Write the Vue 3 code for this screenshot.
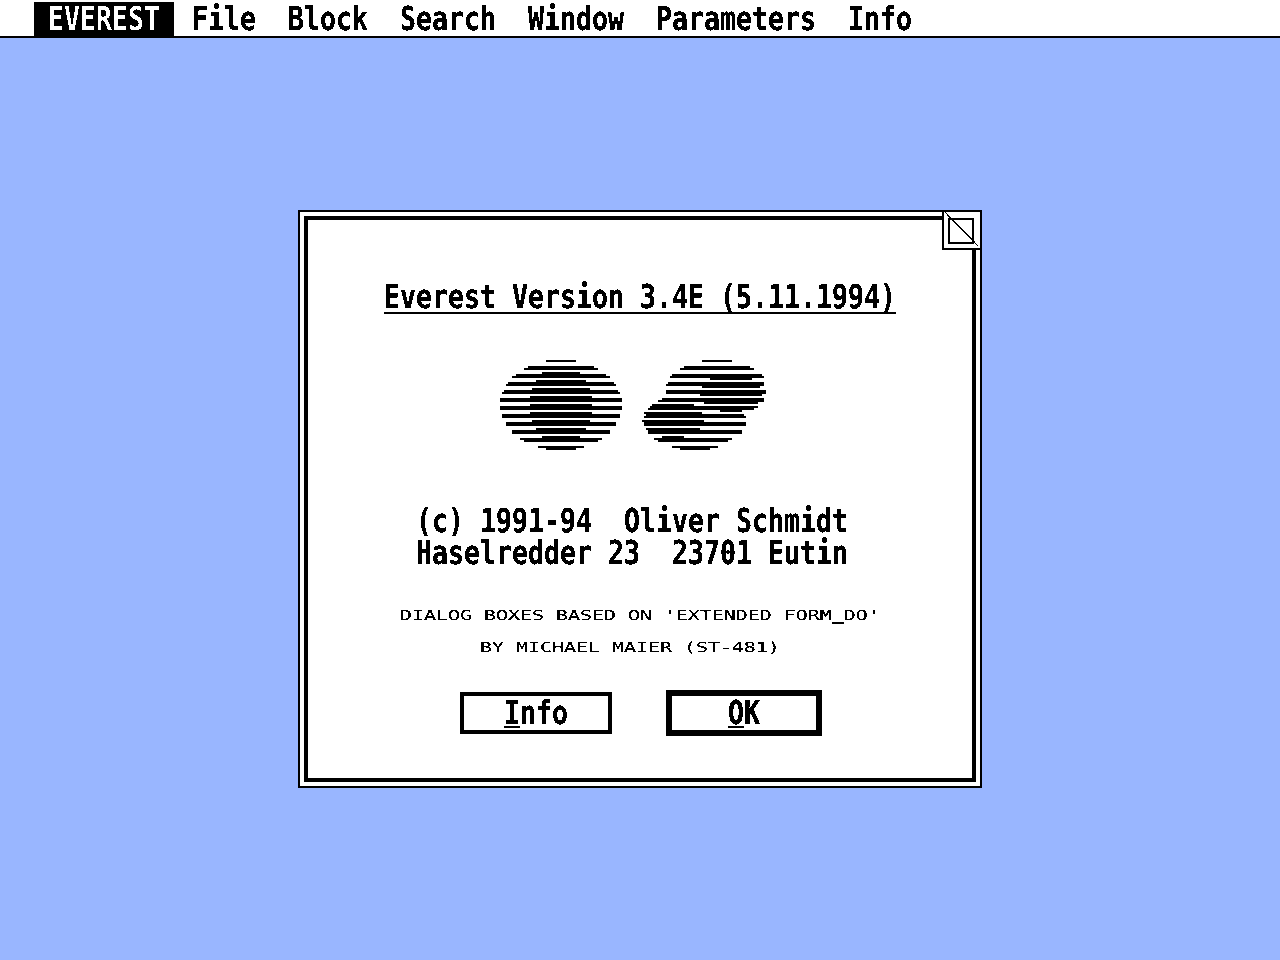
<script setup>
const menus = ['File', 'Block', 'Search', 'Window', 'Parameters', 'Info']

// logo stripes, rows of [x, y, width, height] in screen pixels
const logo = [
  [546, 360, 30, 2], [528, 366, 66, 2], [524, 368, 74, 2], [542, 372, 38, 2], [516, 374, 90, 2], [512, 376, 98, 2],
  [536, 380, 50, 2], [508, 382, 106, 2], [506, 384, 110, 2], [532, 388, 58, 2], [504, 390, 114, 2], [502, 392, 118, 2],
  [530, 396, 62, 2], [500, 398, 122, 4], [530, 404, 62, 2], [500, 406, 122, 4], [530, 412, 62, 2], [502, 414, 118, 4],
  [532, 420, 58, 2], [506, 422, 110, 4], [536, 428, 50, 2], [512, 430, 98, 4], [542, 436, 38, 2], [520, 438, 82, 2],
  [524, 440, 74, 2], [538, 446, 46, 2], [546, 448, 30, 2],
  [702, 360, 30, 2], [684, 366, 66, 2], [680, 368, 74, 2], [672, 374, 90, 2], [670, 376, 94, 2], [710, 378, 42, 2],
  [668, 382, 96, 2], [666, 384, 98, 2], [702, 386, 58, 2], [666, 390, 100, 4], [700, 394, 62, 2], [662, 398, 102, 2],
  [658, 400, 106, 2], [704, 402, 54, 2], [652, 404, 42, 2], [650, 406, 108, 2],
  [648, 408, 106, 2], [720, 410, 22, 2], [644, 412, 58, 2], [646, 414, 98, 2], [644, 416, 102, 2], [642, 420, 62, 2],
  [644, 422, 102, 4], [646, 428, 54, 2], [648, 430, 94, 4], [662, 436, 22, 2], [654, 438, 78, 2], [658, 440, 70, 2],
  [672, 446, 46, 2], [680, 448, 30, 2]
]
</script>

<template>
  <div class="screen">
    <svg class="defs" width="0" height="0" aria-hidden="true">
      <filter id="mono" color-interpolation-filters="sRGB" x="0" y="0" width="100%" height="100%">
        <feComponentTransfer>
          <feFuncR type="discrete" tableValues="0 0 1" />
          <feFuncG type="discrete" tableValues="0 0 1" />
          <feFuncB type="discrete" tableValues="0 0 1" />
        </feComponentTransfer>
      </filter>
    </svg>

    <header class="menubar">
      <span class="menu active"><span class="big">EVEREST</span></span>
      <span v-for="m in menus" :key="m" class="menu"><span class="big">{{ m }}</span></span>
    </header>

    <main class="desktop">
      <section class="dialog">
        <svg class="closer" width="40" height="40" viewBox="0 0 40 40" shape-rendering="crispEdges">
          <rect x="1" y="1" width="38" height="38" fill="#fff" stroke="#000" stroke-width="2" />
          <rect x="7" y="9" width="24" height="24" fill="none" stroke="#000" stroke-width="2" />
          <path d="M3 2 L36 36" stroke="#000" stroke-width="1.3" />
        </svg>
        <div class="frame">
          <h1 class="title"><span class="big">Everest Version 3.4E (5.11.1994)</span></h1>

          <svg class="logo" width="280" height="90" viewBox="500 360 280 90" shape-rendering="crispEdges">
            <rect v-for="(r, i) in logo" :key="i" :x="r[0]" :y="r[1]" :width="r[2]" :height="r[3]" />
          </svg>

          <div class="credits">
            <div class="big">(c) 1991-94&nbsp;&nbsp;Oliver Schmidt</div>
            <div class="big">Haselredder 23&nbsp;&nbsp;23701 Eutin</div>
          </div>

          <div class="notes">
            <div class="small">DIALOG BOXES BASED ON 'EXTENDED FORM<b class="under">_</b>DO'</div>
            <div class="small second">BY MICHAEL MAIER (ST-481)</div>
          </div>

          <div class="buttons">
            <button class="btn info"><span class="big">Info</span><i class="key"></i></button>
            <button class="btn ok"><span class="big">OK</span><i class="key"></i></button>
          </div>
        </div>
      </section>
    </main>
  </div>
</template>

<style>
body {
  margin: 0;
  background: #99b6ff;
}
</style>

<style scoped>
.screen {
  width: 1280px;
  height: 960px;
  overflow: hidden;
  display: flex;
  flex-direction: column;
  background: #99b6ff;
  color: #000;
  font-family: "DejaVu Sans Mono", "Liberation Mono", monospace;
}

.defs {
  position: absolute;
}

/* the text is stretched to the tall 16x32 system font cell */
.big {
  display: block;
  font-size: 26.58px;
  font-weight: 700;
  line-height: 32px;
  white-space: pre;
  text-rendering: geometricPrecision;
  transform: scaleY(1.24);
}

/* and squashed to the wide 12px small font */
.small {
  display: block;
  font-size: 19.93px;
  font-weight: 400;
  line-height: 32px;
  white-space: pre;
  text-rendering: geometricPrecision;
  transform: scaleY(0.69);
}

.under {
  font-weight: 700;
  text-shadow: 0 1px 0 #000;
}

.menubar {
  flex: none;
  box-sizing: border-box;
  height: 38px;
  display: flex;
  padding-left: 32px;
  background: #fff;
  border-bottom: 2px solid #000;
  filter: url(#mono);
}

.menu {
  padding: 3px 16px 0;
  height: 33px;
}

.menu .big {
  margin-top: 1px;
}

.menu.active {
  margin: 2px 2px 0;
  padding: 1px 14px 0;
  background: #000;
  color: #fff;
}

.desktop {
  flex: 1;
  padding-top: 172px;
}

.dialog {
  position: relative;
  box-sizing: border-box;
  width: 684px;
  height: 578px;
  margin: 0 auto;
  padding: 4px;
  background: #fff;
  border: 2px solid #000;
  filter: url(#mono);
}

.closer {
  position: absolute;
  top: -2px;
  right: -2px;
}

.frame {
  box-sizing: border-box;
  height: 100%;
  display: flex;
  flex-direction: column;
  align-items: center;
  padding-top: 62px;
  border: 4px solid #000;
}

.title {
  width: 512px;
  height: 32px;
  box-sizing: border-box;
  margin: 0;
  border-bottom: 2px solid #000;
}

.logo {
  flex: none;
  margin-top: 46px;
}

.credits {
  width: 432px;
  margin-top: 56px;
  margin-right: 16px;
}

.notes {
  width: 480px;
  margin-top: 30px;
}

.second {
  padding-left: 80px;
}

.buttons {
  display: flex;
  align-items: center;
  gap: 54px;
  height: 46px;
  margin-top: 26px;
  padding-left: 2px;
}

.btn {
  position: relative;
  box-sizing: border-box;
  padding: 1px 0 0;
  background: #fff;
  color: #000;
  font: inherit;
  display: flex;
  align-items: center;
  justify-content: center;
}

.info {
  width: 152px;
  height: 42px;
  border: 4px solid #000;
}

.ok {
  width: 156px;
  height: 46px;
  border: 6px solid #000;
}

.key {
  position: absolute;
  top: 30px;
  width: 16px;
  height: 2px;
  background: #000;
}

.info .key {
  left: 40px;
}

.ok .key {
  top: 30px;
  left: 56px;
}
</style>
